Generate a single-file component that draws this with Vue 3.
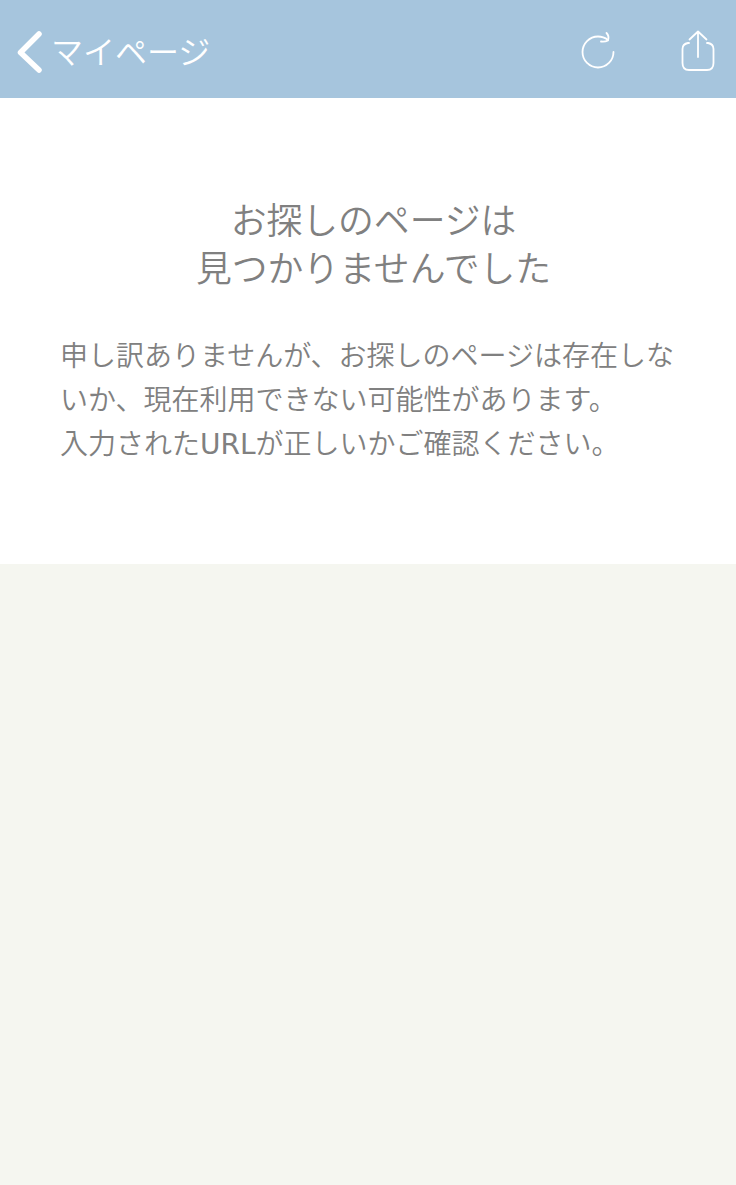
<script setup>
import { ref } from 'vue';

const backTitle = ref('マイページ')

const heading = ref([
    'お探しのページは',
    '見つかりませんでした'
])
</script>

<template>
    <div class="page">
        <header class="navbar">
            <a class="back">
                <svg class="back__icon" width="28" height="44" viewBox="0 0 28 44">
                    <path d="M23 4L4.500 22.500L23 40" />
                </svg>
                <span class="back__title">{{ backTitle }}</span>
            </a>
            <div class="actions">
                <svg width="36" height="42" viewBox="0 0 36 42">
                    <path d="M33.500 22A15.500 15.500 0 1 1 18 6.500Q23.500 6.500 28 10" />
                    <path d="M26.500 3Q29.500 6 28 10.500Q25 12 21 11.500" />
                </svg>
                <svg width="36" height="42" viewBox="0 0 36 42">
                    <path d="M9 13H8Q2.500 14 2.500 19V33Q2.500 40 9 40H27Q33.500 40 33.500 33V19Q33.500 14 28 13H27" />
                    <path d="M18 27V1.500M9.500 9.500L18 1.500L26.500 9.500" />
                </svg>
            </div>
        </header>
        <main class="content">
            <h1 class="heading">
                <span v-for="line in heading" :key="line" class="line">{{ line }}</span>
            </h1>
            <p class="message">
                <span class="line">申し訳ありませんが、お探しのページは存在しな</span>
                <span class="line">いか、現在利用できない可能性があります。</span>
                <span class="line">入力された<span class="latin">URL</span>が正しいかご確認ください。</span>
            </p>
        </main>
    </div>
</template>

<style>
    body {
        margin: 0;
        background: #f5f6f0;
    }
</style>

<style scoped>
    .page {
        min-height: 1185px;
        background: #f5f6f0;
        color: #808080;
        font-family: "Noto Sans CJK JP", sans-serif;
        font-weight: 350;
    }
    .navbar {
        display: flex;
        align-items: center;
        justify-content: space-between;
        box-sizing: border-box;
        height: 98px;
        padding: 5px 20px 0 16px;
        background: #a6c5dd;
        color: #fff;
    }
    .back {
        display: flex;
        align-items: center;
        gap: 7px;
    }
    .back__title {
        padding-bottom: 4px;
        font-size: 32px;
        font-weight: 350;
        line-height: 44px;
    }
    .actions {
        display: flex;
        gap: 64px;
        padding-bottom: 1px;
    }
    svg {
        display: block;
        fill: none;
        stroke: #fff;
        stroke-width: 1.8;
        stroke-linecap: round;
        stroke-linejoin: round;
    }
    .back__icon {
        stroke-width: 5.5;
    }
    .content {
        box-sizing: border-box;
        height: 466px;
        padding: 96px 60px 0;
        background: #fff;
    }
    .heading {
        margin: 0 0 42px 11px;
        font-size: 35.8px;
        font-weight: 350;
        line-height: 48px;
        text-align: center;
    }
    .message {
        margin: 0;
        font-size: 28px;
        line-height: 44px;
    }
    .line {
        display: block;
        white-space: nowrap;
    }
    .latin {
        font-family: "DejaVu Sans", sans-serif;
        font-weight: 400;
        line-height: 1;
    }
</style>
